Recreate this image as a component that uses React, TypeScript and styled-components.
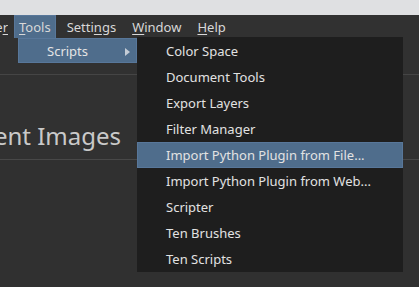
import styled, { createGlobalStyle } from "styled-components";

const GlobalStyle = createGlobalStyle`
  html, body {
    margin: 0;
    padding: 0;
    background: #313131;
    overflow: hidden;
  }
  body {
    font-family: "Noto Sans", "Open Sans", sans-serif;
  }
`;

const menus = [
  { label: "Tools", key: "T" },
  { label: "Settings", key: "n" },
  { label: "Window", key: "W" },
  { label: "Help", key: "H" },
];

const scripts = [
  "Color Space",
  "Document Tools",
  "Export Layers",
  "Filter Manager",
  "Import Python Plugin from File...",
  "Import Python Plugin from Web...",
  "Scripter",
  "Ten Brushes",
  "Ten Scripts",
];

export default function App() {
  return (
    <>
      <GlobalStyle />
      <Page>
        <TitleStrip />
        <MenuBar>
          <ClipLeft width={8}>
            <MenuLabel>
              Filte<u>r</u>
            </MenuLabel>
          </ClipLeft>
          {menus.map((m) => (
            <MenuItem key={m.label} active={m.label === "Tools"}>
              <Mnemonic label={m.label} mark={m.key} />
            </MenuItem>
          ))}
        </MenuBar>
        <Content>
          <TopBand />
          <HeadingRow>
            <ClipLeft width={121}>
              <Heading>Recent Images</Heading>
            </ClipLeft>
          </HeadingRow>
          <Rest />
        </Content>

        <ToolsMenu>
          <ToolsEntry>
            Scripts
            <Arrow viewBox="0 0 5 8">
              <path d="M0 0 L5 4 L0 8 Z" fill="#c4ccd6" />
            </Arrow>
          </ToolsEntry>
        </ToolsMenu>

        <ScriptsMenu>
          {scripts.map((s) => (
            <ScriptItem key={s} active={s === "Import Python Plugin from File..."}>
              {s}
            </ScriptItem>
          ))}
        </ScriptsMenu>
      </Page>
    </>
  );
}

const Mnemonic = ({ label, mark }: { label: string; mark: string }) => {
  const i = label.indexOf(mark);
  return (
    <MenuLabel>
      {label.slice(0, i)}
      <u>{label[i]}</u>
      {label.slice(i + 1)}
    </MenuLabel>
  );
};

const Page = styled.div`
  position: relative;
  width: 419px;
  height: 287px;
  display: flex;
  flex-direction: column;
  overflow: hidden;
`;

const TitleStrip = styled.div`
  height: 15px;
  background: #dfe0e2;
`;

const MenuBar = styled.div`
  height: 23px;
  display: flex;
  align-items: stretch;
  gap: 6px;
  background: #313131;
`;

const ClipLeft = styled.div<{ width: number }>`
  width: ${(p) => p.width}px;
  display: flex;
  justify-content: flex-end;
  align-items: center;
  overflow: hidden;
  flex-shrink: 0;
`;

const MenuItem = styled.div<{ active?: boolean }>`
  display: flex;
  align-items: center;
  padding: 0 4px;
  box-sizing: border-box;
  background: ${(p) => (p.active ? "#4f6d8c" : "transparent")};
  border: 1px solid ${(p) => (p.active ? "#58779a" : "transparent")};
  border-bottom: none;
`;

const MenuLabel = styled.span`
  font-size: 13px;
  color: #d8d8d8;
  white-space: nowrap;

  u {
    text-decoration-thickness: 1px;
    text-underline-offset: 2px;
  }
`;

const Content = styled.div`
  flex: 1;
  display: flex;
  flex-direction: column;
`;

const TopBand = styled.div`
  height: 36px;
  border-bottom: 1px solid #454545;
`;

const HeadingRow = styled.div`
  height: 85px;
  display: flex;
  align-items: center;
  padding-top: 37px;
  box-sizing: border-box;
  border-bottom: 1px solid #484848;
`;

const Heading = styled.span`
  font-size: 24px;
  color: #c9c9c9;
  white-space: nowrap;
`;

const Rest = styled.div`
  flex: 1;
  background: #303030;
`;

const ToolsMenu = styled.div`
  position: absolute;
  left: 18px;
  top: 38px;
  width: 119px;
  height: 25px;
`;

const ToolsEntry = styled.div`
  height: 100%;
  box-sizing: border-box;
  display: flex;
  align-items: center;
  padding-left: 28px;
  background: #4f6d8c;
  border: 1px solid #58779a;
  font-size: 13px;
  color: #e4e4e4;
  position: relative;
`;

const Arrow = styled.svg`
  position: absolute;
  right: 6px;
  top: 9px;
  width: 5px;
  height: 8px;
`;

const ScriptsMenu = styled.div`
  position: absolute;
  left: 137px;
  top: 37px;
  width: 266px;
  height: 235px;
  box-sizing: border-box;
  padding-top: 1px;
  background: #1e1e1e;
  display: flex;
  flex-direction: column;
`;

const ScriptItem = styled.div<{ active?: boolean }>`
  height: 26px;
  flex-shrink: 0;
  box-sizing: border-box;
  display: flex;
  align-items: center;
  padding-left: 28px;
  font-size: 13px;
  color: #e2e2e2;
  white-space: nowrap;
  background: ${(p) => (p.active ? "#4f6d8c" : "transparent")};
  border: 1px solid ${(p) => (p.active ? "#58779a" : "transparent")};
`;
